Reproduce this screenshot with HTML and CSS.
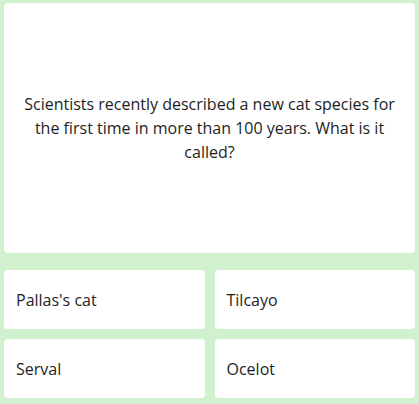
FILE: index.html
```html
<!DOCTYPE html>
<html>
<head>
    <link rel="stylesheet" href="styles.css">
</head>
<body>
    <div id="quiz">
        <div class="question-card">
            <p class="question-text">Scientists recently described a new cat species for the first time in more than 100 years. What is it called?</p>
        </div>

        <div id="answers">
            <div class="answer">Pallas's cat</div>
            <div class="answer">Tilcayo</div>
            <div class="answer">Serval</div>
            <div class="answer">Ocelot</div>
        </div>
    </div>
</body>
</html>
```

FILE: styles.css
```css
body {
    margin: 0;
    padding: 0;
    background-color: #d1f0cd;
    font-family: "Open Sans", sans-serif;
    color: #1e1e1e;
}

#quiz {
    padding: 3px 4px 6px 4px;
    display: flex;
    flex-direction: column;
    height: 404px;
    box-sizing: border-box;
}

.question-card {
    height: 250px;
    background-color: white;
    border-radius: 4px;
    display: flex;
    align-items: center;
    justify-content: center;
    padding: 0 20px;
    box-sizing: border-box;
}

.question-text {
    margin: 0;
    font-size: 16px;
    line-height: 24px;
    text-align: center;
}

#answers {
    margin-top: 17px;
    display: grid;
    grid-template-columns: 1fr 1fr;
    grid-auto-rows: 59px;
    gap: 10px;
}

.answer {
    background-color: white;
    border-radius: 4px;
    display: flex;
    align-items: center;
    padding-left: 12px;
    font-size: 16px;
}
```
